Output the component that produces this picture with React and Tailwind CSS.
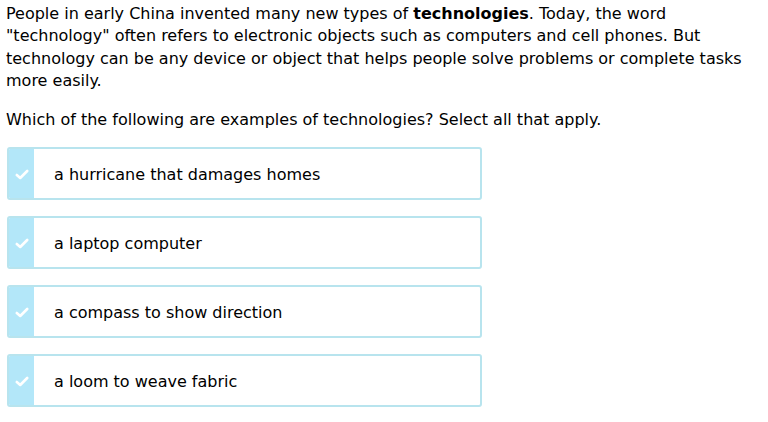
export default function App() {
  const options = [
    "a hurricane that damages homes",
    "a laptop computer",
    "a compass to show direction",
    "a loom to weave fabric",
  ];
  return (
    <div
      className="bg-white w-[768px] h-[422px] overflow-hidden text-black px-[6px] pt-[3px]"
      style={{ fontFamily: '"DejaVu Sans", Verdana, sans-serif' }}
    >
      <p className="text-[16px] leading-[22.4px] pr-[14px]">
        People in early China invented many new types of <b>technologies</b>. Today, the word "technology" often refers to electronic objects such as computers and cell phones. But technology can be any device or object that helps people solve problems or complete tasks more easily.
      </p>
      <p className="text-[16px] leading-[22.4px] mt-[16px]">
        Which of the following are examples of technologies? Select all that apply.
      </p>
      <div className="flex flex-col gap-[16px] mt-[16px] ml-[1px]">
        {options.map((o) => (
          <div
            key={o}
            className="flex w-[475px] h-[53px] rounded-[3px] border-2 border-[#b8e4ee] overflow-hidden"
          >
            <div className="w-[25px] bg-[#b3e7f9] flex items-center justify-center pt-[2px]">
              <svg width="14" height="11" viewBox="0 0 14 11">
                <path d="M1.8 6 L5.2 9 L12.2 2" fill="none" stroke="white" strokeWidth="2.6" strokeLinecap="round" strokeLinejoin="round" />
              </svg>
            </div>
            <div className="flex-1 flex items-center pl-[20px] pt-[2px] text-[16px]">{o}</div>
          </div>
        ))}
      </div>
    </div>
  );
}
